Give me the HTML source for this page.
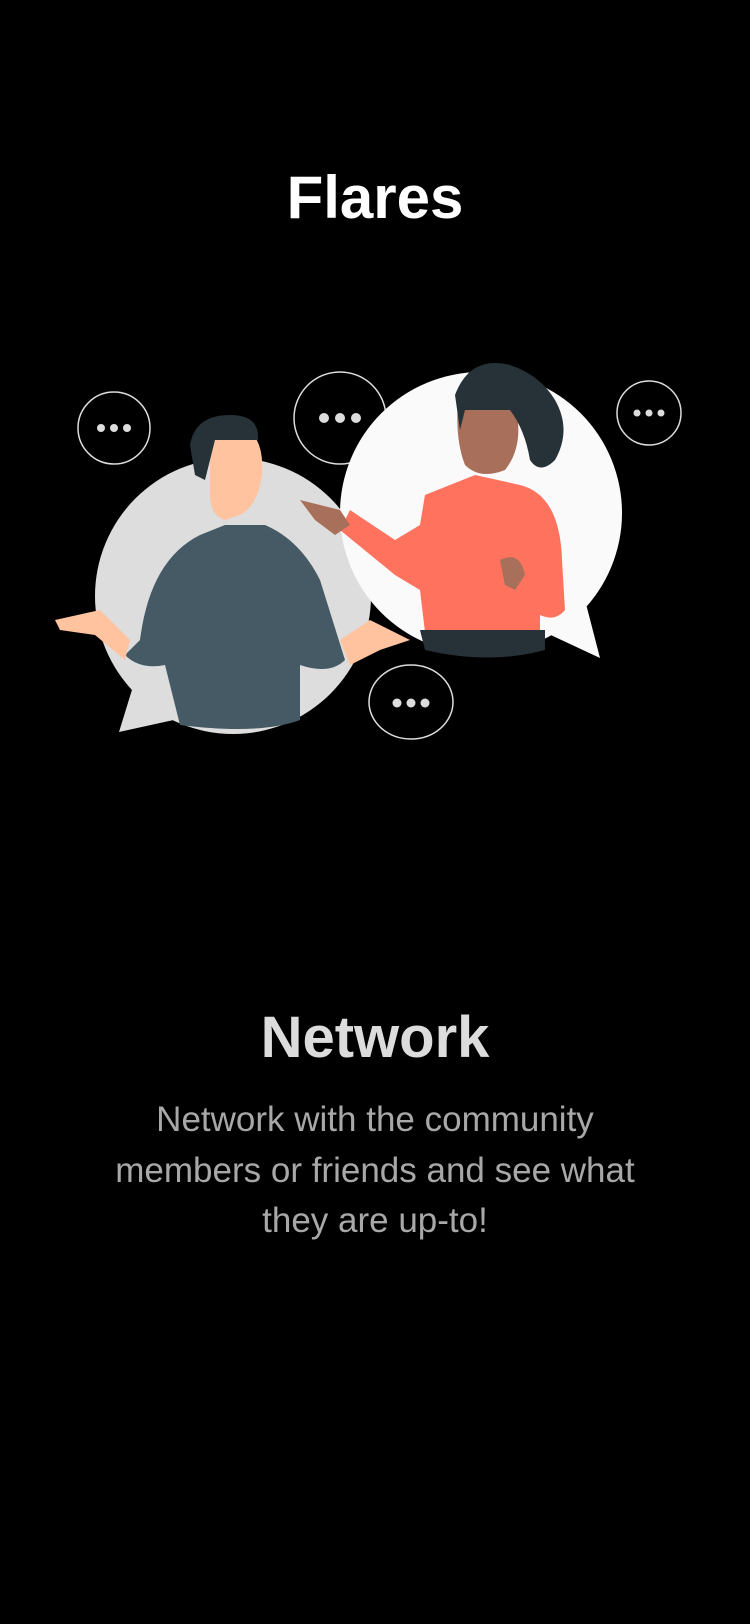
<!DOCTYPE html>
<html><head><meta charset="utf-8"><style>
html,body{margin:0;padding:0;background:#000;}
body{width:750px;height:1624px;position:relative;overflow:hidden;font-family:"Liberation Sans",sans-serif;}
.t{position:absolute;left:0;width:750px;text-align:center;}
#flares{top:163px;font-size:60px;font-weight:bold;color:#fff;}
#net{top:1004px;font-size:58px;font-weight:bold;color:#dcdcdc;}
#body{top:1095px;font-size:35px;line-height:50.5px;color:#a8a8a8;}
</style></head><body>
<div class="t" id="flares">Flares</div>
<svg width="750" height="800" style="position:absolute;left:0;top:0" viewBox="0 0 750 800">
<g fill="#000" stroke="#ddd" stroke-width="1.5">
<ellipse cx="114" cy="428" rx="36" ry="36"/>
<ellipse cx="340" cy="418" rx="46" ry="46"/>
<ellipse cx="649" cy="413" rx="32" ry="32"/>
<ellipse cx="411" cy="702" rx="42" ry="37"/>
</g>
<g fill="#ddd">
<circle cx="101" cy="428" r="4"/><circle cx="114" cy="428" r="4"/><circle cx="127" cy="428" r="4"/>
<circle cx="324" cy="418" r="5"/><circle cx="340" cy="418" r="5"/><circle cx="356" cy="418" r="5"/>
<circle cx="637" cy="413" r="3.5"/><circle cx="649" cy="413" r="3.5"/><circle cx="661" cy="413" r="3.5"/>
<circle cx="397" cy="703" r="4.5"/><circle cx="411" cy="703" r="4.5"/><circle cx="425" cy="703" r="4.5"/>
</g>
<path d="M119 732 L135 680 L210 712 Z" fill="#ddd"/>
<circle cx="233" cy="596" r="138" fill="#ddd"/>
<path d="M140 640 Q150 560 200 535 L225 525 L265 525 Q300 540 320 580 L345 660 Q330 675 300 665 L300 720 Q260 735 180 725 L165 665 Q140 670 125 655 Z" fill="#455a64"/>
<path d="M210 460 Q205 430 235 425 Q265 430 262 475 Q258 505 240 515 L225 520 Q210 515 210 495 Z" fill="#ffc3a0"/>
<path d="M190 445 Q195 415 230 415 Q260 415 258 440 L215 440 L205 480 L195 475 Z" fill="#263238"/>
<path d="M55 620 L100 610 L130 640 L125 660 L95 635 L60 630 Z" fill="#ffc3a0"/>
<path d="M340 640 L370 620 L410 640 L380 650 L350 665 Z" fill="#ffc3a0"/>
<path d="M600 658 L585 600 L540 630 Z" fill="#fafafa"/>
<circle cx="481" cy="513" r="141" fill="#fafafa"/>
<path d="M425 495 L475 475 L520 485 Q560 495 562 560 L565 610 Q555 622 540 615 L540 632 L425 632 L420 590 L395 575 L340 530 L350 510 L395 540 L420 525 Z" fill="#ff725e"/>
<path d="M420 630 L545 630 L545 650 Q490 665 425 650 Z" fill="#263238"/>
<path d="M458 400 Q490 385 515 405 Q525 445 505 470 Q480 480 465 465 Q455 440 458 400 Z" fill="#a86f5b"/>
<path d="M455 395 Q470 355 510 365 Q540 375 555 400 Q572 430 555 460 Q540 475 530 460 Q525 430 510 410 L465 410 L460 430 Z" fill="#263238"/>
<path d="M300 500 L340 510 L350 525 L335 535 L315 520 Z" fill="#a86f5b"/>
<path d="M500 560 Q520 550 525 575 L515 590 L505 585 Z" fill="#a86f5b"/>
</svg>
<div class="t" id="net">Network</div>
<div class="t" id="body">Network with the community<br>members or friends and see what<br>they are up-to!</div>
</body></html>
